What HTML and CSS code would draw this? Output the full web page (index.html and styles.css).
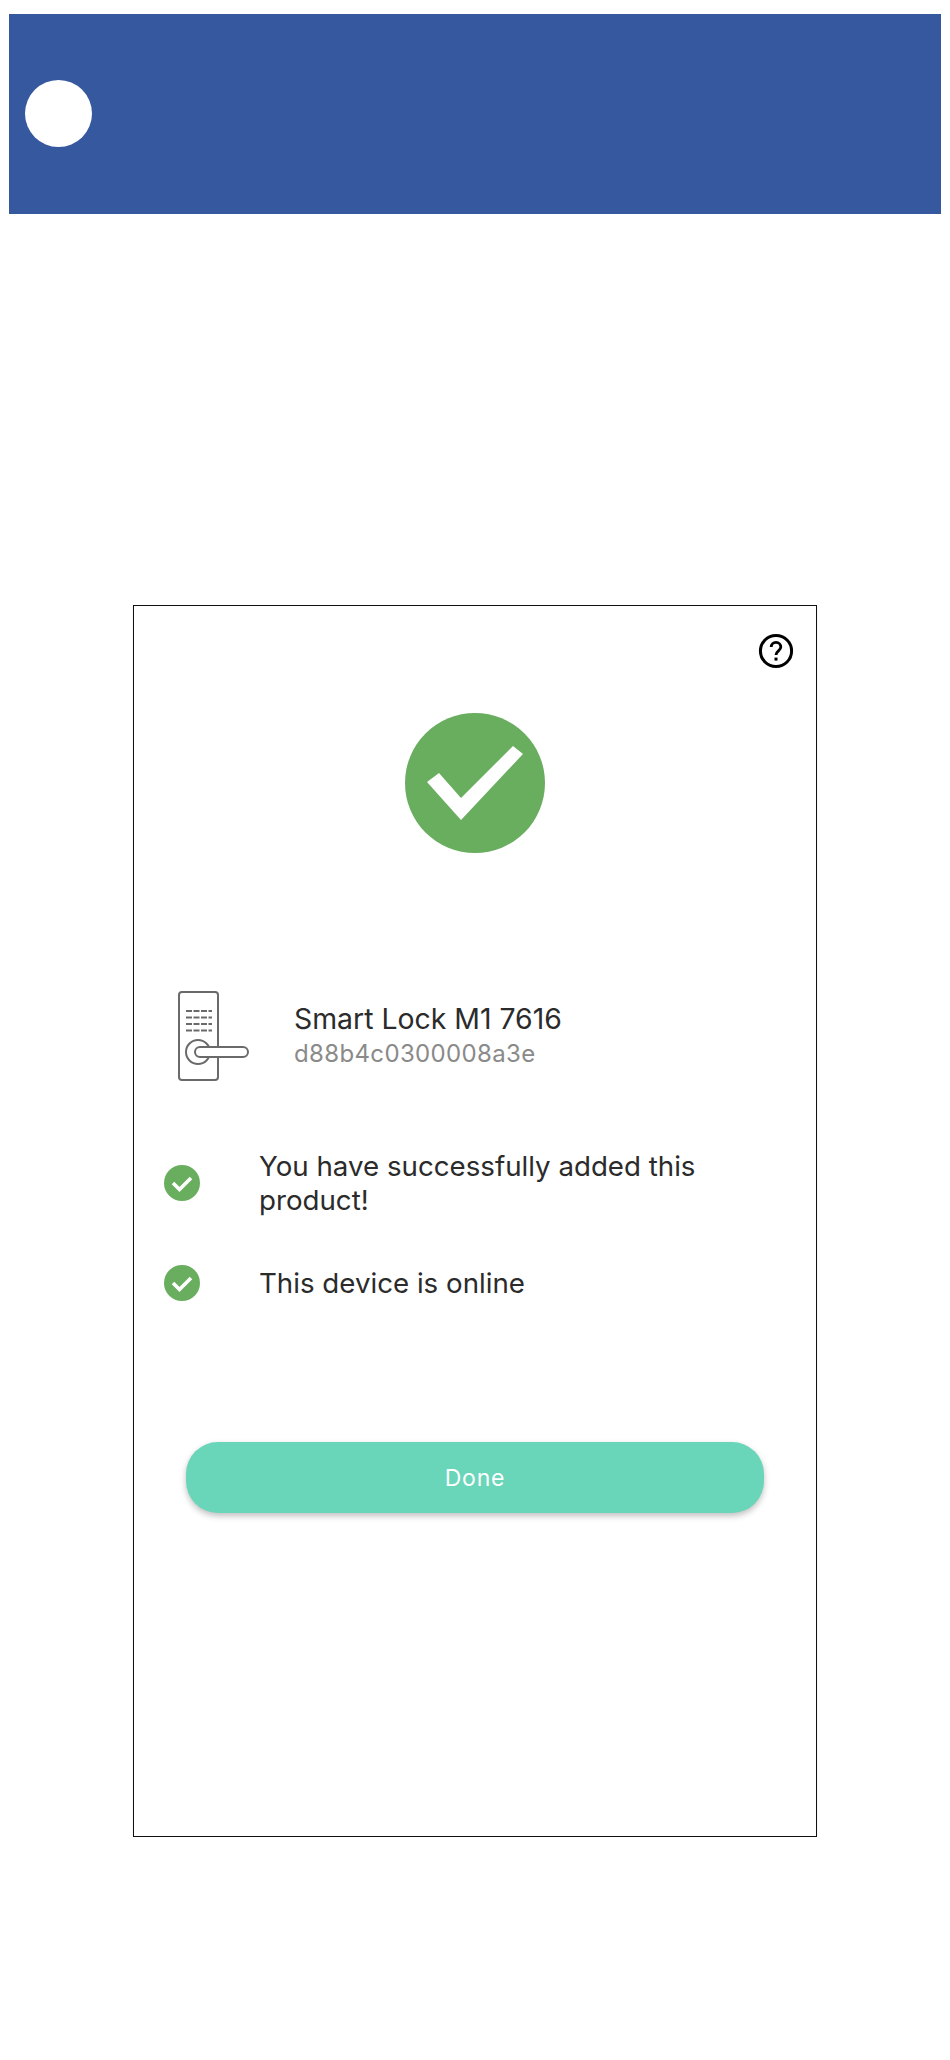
FILE: index.html
```html
<!DOCTYPE html>
<html lang="en">
<head>
    <meta charset="UTF-8">
    <meta name="viewport" content="width=device-width, initial-scale=1.0">
    <title>Smart Lock</title>
    <link rel="stylesheet" href="styles.css">
</head>
<body>
    <div class="banner">
        <div class="banner-dot"></div>
    </div>

    <div class="card">
        <div class="help-row">
            <svg class="help-icon" viewBox="0 0 24 24">
                <circle cx="12" cy="12" r="10.4" fill="none" stroke="#000" stroke-width="2"/>
                <path d="M8.8 9.4a3.2 3.2 0 0 1 6.4 0c0 2.4-3.2 2.6-3.2 5.2" fill="none" stroke="#000" stroke-width="1.9"/>
                <rect x="11" y="16.4" width="2" height="2" fill="#000"/>
            </svg>
        </div>

        <div class="success-row">
            <svg class="success-icon" viewBox="0 0 140 140">
                <circle cx="70" cy="70" r="70" fill="#69ae5f"/>
                <path d="M22 69l12-9 22 25 52-52 10 8-62 66z" fill="#fff"/>
            </svg>
        </div>

        <div class="device">
            <svg class="device-icon" viewBox="0 0 72 90">
                <rect x="1" y="1" width="39" height="88" rx="3" fill="#fff" stroke="#6a6a6a" stroke-width="2"/>
                <path d="M8 20h26M8 26.5h26M8 33h26M8 39.5h26" stroke="#6a6a6a" stroke-width="2" stroke-dasharray="6 1.5"/>
                <circle cx="20" cy="61" r="12" fill="#fff" stroke="#6a6a6a" stroke-width="2"/>
                <rect x="17" y="56" width="53" height="10" rx="5" fill="#fff" stroke="#6a6a6a" stroke-width="2"/>
            </svg>
            <div class="device-info">
                <div class="device-name">Smart Lock M1 7616</div>
                <div class="device-id">d88b4c0300008a3e</div>
            </div>
        </div>

        <div class="status-list">
            <div class="status-item">
                <svg class="status-icon" viewBox="0 0 36 36">
                    <circle cx="18" cy="18" r="18" fill="#69ae5f"/>
                    <path d="M9 18l6.5 6.5L27 13" fill="none" stroke="#fff" stroke-width="3.6"/>
                </svg>
                <div class="status-text">You have successfully added this product!</div>
            </div>
            <div class="status-item">
                <svg class="status-icon" viewBox="0 0 36 36">
                    <circle cx="18" cy="18" r="18" fill="#69ae5f"/>
                    <path d="M9 18l6.5 6.5L27 13" fill="none" stroke="#fff" stroke-width="3.6"/>
                </svg>
                <div class="status-text">This device is online</div>
            </div>
        </div>

        <button class="done-btn">Done</button>
    </div>
</body>
</html>
```

FILE: styles.css
```css
* {
    margin: 0;
    padding: 0;
    box-sizing: border-box;
}

body {
    font-family: Inter, "Liberation Sans", sans-serif;
    background-color: #ffffff;
    color: #2b2b2b;
}

.banner {
    margin: 14px 9px 0;
    height: 200px;
    padding: 0 0 2px 16px;
    background-color: #36589f;
    display: flex;
    align-items: center;
}

.banner-dot {
    width: 67px;
    height: 67px;
    border-radius: 50%;
    background-color: #ffffff;
}

.card {
    width: 684px;
    height: 1232px;
    margin: 391px 0 0 133px;
    border: 1px solid #111111;
    box-shadow: 0 1px 1px rgba(0, 0, 0, 0.2);
    display: flex;
    flex-direction: column;
}

.help-row {
    display: flex;
    justify-content: flex-end;
    padding: 27px 22px 0 0;
}

.help-icon {
    width: 36px;
    height: 36px;
}

.success-row {
    display: flex;
    justify-content: center;
    margin-top: 44px;
}

.success-icon {
    width: 140px;
    height: 140px;
}

.device {
    display: flex;
    align-items: center;
    margin-top: 138px;
    padding-left: 44px;
}

.device-icon {
    width: 72px;
    height: 90px;
}

.device-info {
    margin-left: 44px;
}

.device-name {
    font-size: 28.4px;
    line-height: 36px;
}

.device-id {
    font-size: 24px;
    line-height: 34px;
    color: #8a8a8a;
    letter-spacing: 0.35px;
}

.status-list {
    display: flex;
    flex-direction: column;
    gap: 48px;
    margin-top: 68px;
    padding-left: 30px;
}

.status-item {
    display: flex;
    align-items: center;
}

.status-icon {
    width: 36px;
    height: 36px;
    flex-shrink: 0;
}

.status-text {
    width: 480px;
    margin-left: 59px;
    font-size: 27.7px;
    line-height: 34px;
}

.done-btn {
    align-self: center;
    width: 578px;
    height: 71px;
    margin-top: 141px;
    border: none;
    border-radius: 32px;
    background-color: #69d5b9;
    color: #ffffff;
    font-family: inherit;
    font-size: 23px;
    letter-spacing: 0.8px;
    box-shadow: 0 3px 6px rgba(0, 0, 0, 0.25);
}
```
